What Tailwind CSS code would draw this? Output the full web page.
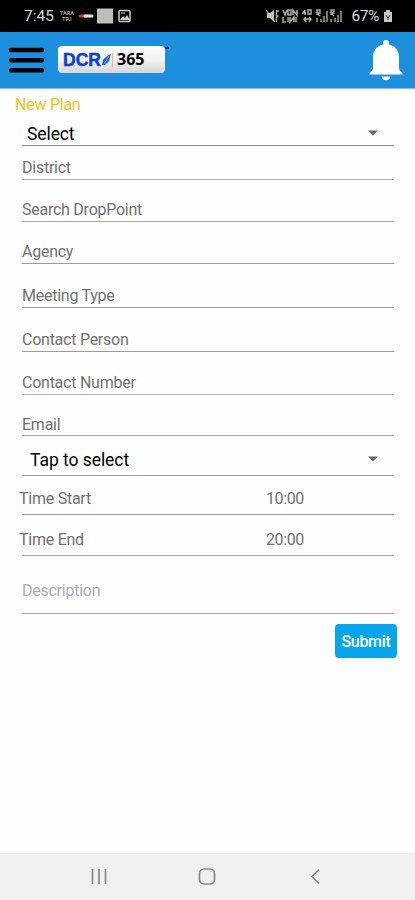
<!DOCTYPE html>
<html lang="en">
<head>
<meta charset="utf-8">
<title>New Plan</title>
<script src="https://cdn.jsdelivr.net/npm/@tailwindcss/browser@4"></script>
</head>
<body class="bg-[#fefefe] font-[Roboto,sans-serif]">
<div class="flex h-[900px] w-[415px] flex-col overflow-hidden">
  <div class="flex h-8 shrink-0 items-center bg-black pl-6 text-[#dcdcdc]">
    <span class="w-[36px] whitespace-nowrap text-[15.500px] leading-[34px]">7:45</span>
    <span class="flex w-[18px] flex-col text-[5.500px] font-bold leading-[6px] text-[#aaa]"><span>TARA</span><span class="pl-0.5">TPJ</span></span>
    <svg width="54" height="18" viewBox="0 0 54 18"><path d="M2 9h6" stroke="#e33227" stroke-width="3" stroke-linecap="round"/><path d="M7 9h7" stroke="#eee" stroke-width="3" stroke-linecap="round"/><path d="M19 1.500h16v15H19z" fill="#bdbdbd"/><rect x="41" y="3.500" width="11" height="11" rx="1" fill="none" stroke="#ccc" stroke-width="1.500"/><path d="M42 13l3-4 2 2 2-3 3 5z" fill="#ccc"/><path d="M43 6h4" stroke="#ccc"/></svg>
    <svg class="ml-auto" width="78" height="16" viewBox="0 0 78 16" fill="#c4c4c4"><path d="M2 5h3l4-3v12l-4-4H2z"/><path d="M1 2l9 12" stroke="#c4c4c4" stroke-width="1.200"/><path d="M11.500 2v12M11.500 3h2.500M11.500 8h2" stroke="#aaa" stroke-width="1.400" fill="none"/><path d="M18 2l2 5 2-5M23 2h3v5h-3zM28 7V2l4 5V2M18 9v5h3M23 9v5M25 9v5l4-5v5M31 9v5" stroke="#aaa" stroke-width="1.500" fill="none"/><path d="M40 2l-2 3h3M40 2v5M43 2h3v4h-3zM39 11h7M41 9l-2 2 2 3M44 9l2 2-2 3" stroke="#b5b5b5" stroke-width="1.400" fill="none"/><path d="M52 7V2h3v3h-3l3 3M52 10v4M56 11v3M59 8v6M62 3v11M66 7V2h3v3h-3l3 3M66 11v3M70 10v4M73 7v7M76 3v11" stroke="#aaa" stroke-width="1.400" fill="none"/></svg>
    <span class="ml-[8px] text-[15.500px] leading-[34px] tracking-[-0.400px]">67%</span>
    <svg class="ml-1 mr-[22px]" width="10" height="14" viewBox="0 0 10 14"><path d="M3 1h4v2h2v10H1V3h2z" fill="#c8c8c8"/><path d="M3 6l2 3 2-3M5 8v3" stroke="#333" fill="none"/></svg>
  </div>
  <div class="flex h-[56.500px] shrink-0 items-center border-b border-[#7cc0ed] bg-[#1d8fdc] pl-[9px] pr-3">
    <svg width="35" height="26" viewBox="0 0 35 26" stroke="#000" stroke-width="4.400" stroke-linecap="round"><path d="M2 3h31M2 13.200h31M2 23.300h31"/></svg>
    <div class="relative ml-[14px] flex h-[27px] w-[107px] items-center rounded bg-linear-to-b from-white via-[#f3f3f3] to-[#d6d6d6] pl-[5px] font-['Open_Sans',sans-serif] text-[17px] font-bold leading-[27px]">
      <span class="w-[38px] pt-px font-['Liberation_Sans',sans-serif] text-[17.500px] text-[#0b43cf] [-webkit-text-stroke:0.5px_#0b43cf]">DCR</span>
      <svg width="16" height="18" viewBox="0 0 16 18"><path d="M1 14l1-5 4-4 4-2-2 7-4 4z" fill="#1b56bd"/><path d="M3 13l5-8" stroke="#fff" stroke-width=".6"/><path d="M11.500 2v14" stroke="#eeb48d" stroke-width="1.200"/></svg>
      <span class="text-[16px] text-black">365</span>
      <span class="absolute -right-1 top-px h-0.5 w-1 bg-[#07345e]"></span>
    </div>
    <svg class="ml-auto" width="34" height="42" viewBox="0 0 34 42" fill="#fff"><path d="M14 4a3 3 0 0 1 6 0v1.500c6 1.300 10 6 10 12.500v10c0 3 1 4 3.500 6v1.500H.5V34C3 32 4 31 4 28V18C4 11.500 8 6.800 14 5.500zM12.500 37.500h9a4.600 4.600 0 0 1-9 0z"/></svg>
  </div>
  <div class="flex h-[25.500px] shrink-0 items-end pl-[15px] text-[16px] leading-[18px] tracking-[-0.250px] text-[#f9bd1b]">New Plan</div>
  <div class="ml-[22px] flex w-[372px] flex-col text-[16px] leading-5 tracking-[-0.250px] text-[#707070]">
    <div class="flex h-8 items-end justify-between border-b border-[#8e8e8e] pb-px pl-[5px] text-[17.500px] tracking-[-0.100px] text-black"><span>Select</span><svg class="mb-[6px] mr-4" width="10" height="10" viewBox="0 0 10 10"><path d="M0 2.500h10l-5 5z" fill="#666"/></svg></div>
    <div class="flex h-[34px] items-end border-b border-[#b0b0b0] pb-px">District</div>
    <div class="flex h-[42px] items-end border-b border-[#a5a5a5] pb-px">Search DropPoint</div>
    <div class="flex h-[42px] items-end border-b border-[#9c9c9c] pb-px">Agency</div>
    <div class="flex h-[44px] items-end border-b border-[#9c9c9c] pb-px">Meeting Type</div>
    <div class="flex h-[44px] items-end border-b border-[#9c9c9c] pb-px">Contact Person</div>
    <div class="flex h-[43px] items-end border-b border-[#b0b0b0] pb-px">Contact Number</div>
    <div class="flex h-[41px] items-end border-b border-[#a5a5a5]">Email</div>
    <div class="flex h-10 items-end justify-between border-b border-[#a0a0a0] pb-[5px] pl-2 text-[17.500px] tracking-[-0.050px] text-black"><span>Tap to select</span><svg class="mb-[6px] mr-4" width="10" height="10" viewBox="0 0 10 10"><path d="M0 2.500h10l-5 5z" fill="#666"/></svg></div>
    <div class="flex h-[39px] items-end border-b border-[#969696] pb-[5px]"><span class="-ml-[3px] w-[247px]">Time Start</span><span class="tracking-[-0.400px]">10:00</span></div>
    <div class="flex h-[41px] items-end border-b border-[#a5a5a5] pb-[5px]"><span class="-ml-[3px] w-[247px]">Time End</span><span class="tracking-[-0.400px]">20:00</span></div>
    <div class="flex h-[58px] items-end border-b border-[#a5a5a5] pb-3 text-[#ababab]">Description</div>
  </div>
  <button class="ml-[335px] mt-[10px] h-[34px] w-[62px] shrink-0 rounded bg-[#08a5ec] pt-px text-[16px] font-medium leading-[34px] tracking-[-0.300px] text-white">Submit</button>
  <div class="mt-auto flex h-[47px] shrink-0 items-center bg-[#f0f0f0]">
    <svg width="415" height="47" viewBox="0 0 415 47" fill="none" stroke="#888" stroke-width="1.700"><path d="M92.500 16v15M99 16v15M105.500 16v15"/><rect x="199.500" y="16" width="15" height="15" rx="4.500"/><path d="M319 16.500l-7 7 7 7"/></svg>
  </div>
</div>
</body>
</html>
